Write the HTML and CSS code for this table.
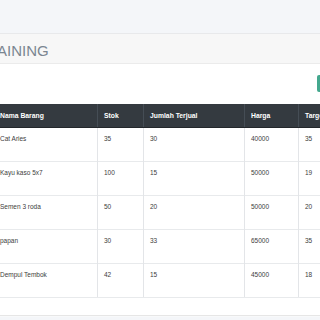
FILE: index.html
```html
<!DOCTYPE html>
<html lang="en">
<head>
    <meta charset="UTF-8">
    <meta name="viewport" content="width=device-width, initial-scale=1.0">
    <title>Data Training</title>
    <link rel="stylesheet" href="styles.css">
</head>
<body>
    <div class="topbar"></div>
    <div class="card">
        <div class="card-header">
            <h3 class="card-title">TRAINING</h3>
        </div>
        <div class="card-body">
            <div class="toolbar">
                <button class="btn-add">Tambah Data</button>
            </div>
            <table class="data-table">
                <thead>
                    <tr>
                        <th class="col-nama">Nama Barang</th>
                        <th class="col-stok">Stok</th>
                        <th class="col-jual">Jumlah Terjual</th>
                        <th class="col-harga">Harga</th>
                        <th class="col-target">Target</th>
                    </tr>
                </thead>
                <tbody>
                    <tr>
                        <td>Cat Aries</td>
                        <td>35</td>
                        <td>30</td>
                        <td>40000</td>
                        <td>35</td>
                    </tr>
                    <tr>
                        <td>Kayu kaso 5x7</td>
                        <td>100</td>
                        <td>15</td>
                        <td>50000</td>
                        <td>19</td>
                    </tr>
                    <tr>
                        <td>Semen 3 roda</td>
                        <td>50</td>
                        <td>20</td>
                        <td>50000</td>
                        <td>20</td>
                    </tr>
                    <tr>
                        <td>papan</td>
                        <td>30</td>
                        <td>33</td>
                        <td>65000</td>
                        <td>35</td>
                    </tr>
                    <tr>
                        <td>Dempul Tembok</td>
                        <td>42</td>
                        <td>15</td>
                        <td>45000</td>
                        <td>18</td>
                    </tr>
                </tbody>
            </table>
        </div>
        <div class="card-footer"></div>
    </div>
</body>
</html>
```

FILE: styles.css
```css
/* Data training page */
body {
    margin: 0;
    background-color: #f4f6f9;
    font-family: "Liberation Sans", Arial, sans-serif;
    overflow: hidden;
}
.topbar {
    height: 33px;
    background-color: #f4f6f9;
}
.card {
    border-top: 1px solid #e8e9eb;
    background-color: #fff;
}
.card-header {
    height: 29px;
    background-color: #f7f7f7;
    border-bottom: 1px solid #ebebeb;
    display: flex;
    align-items: center;
}
.card-title {
    margin: 4px 0 0 -23px;
    font-size: 15px;
    font-weight: normal;
    color: #7b8691;
    white-space: nowrap;
}
.card-body {
    padding: 11px 0 17px;
}
.toolbar {
    display: flex;
    justify-content: flex-end;
    margin-right: -60px;
    margin-bottom: 12px;
}
.btn-add {
    width: 63px;
    height: 17px;
    border: none;
    border-radius: 2px;
    background-color: #44a88e;
    color: #fff;
    font-size: 7px;
    padding: 0;
}
.data-table {
    margin-left: -7px;
    border-collapse: collapse;
    font-size: 6.5px;
    line-height: 10px;
    color: #3d3d3d;
    table-layout: fixed;
    width: 365px;
}
.data-table th,
.data-table td {
    box-sizing: border-box;
}
.data-table th {
    background-color: #343a40;
    color: #fff;
    text-align: left;
    font-weight: bold;
    font-size: 6.8px;
    padding: 7px 6px 6px;
    border-left: 1px solid #454d55;
    border-bottom: 1px solid #23272b;
}
.data-table td {
    padding: 6px 6px 17px;
    border-left: 1px solid #e3e5e8;
    border-top: 1px solid #e8eaec;
    vertical-align: top;
}
.data-table tbody tr:first-child td {
    border-top: none;
}
.data-table tbody tr:last-child td {
    border-bottom: 1px solid #e8eaec;
}
.col-nama {
    width: 104px;
}
.col-stok {
    width: 46px;
}
.col-jual {
    width: 101px;
}
.col-harga {
    width: 54px;
}
.col-target {
    width: 60px;
}
.card-footer {
    height: 1px;
    border-top: 1px solid #e6e6e6;
    background-color: #f8f9fa;
}
```
